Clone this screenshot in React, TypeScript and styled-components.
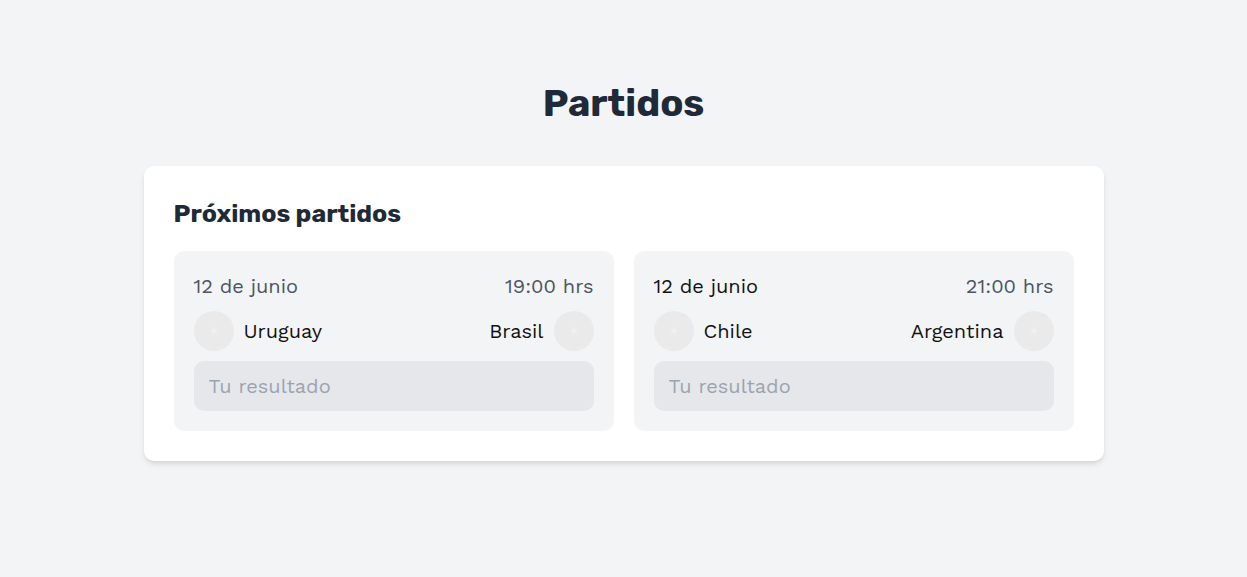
import React from "react";
import styled, { createGlobalStyle } from "styled-components";

const GlobalStyle = createGlobalStyle`
  *, *::before, *::after { box-sizing: border-box; }
  body {
    margin: 0;
    background: #f3f4f6;
    color: #111;
    font-family: "Work Sans", "Inter", sans-serif;
    font-size: 20px;
    font-weight: 400;
    line-height: 30px;
  }
`;

const Page = styled.main`
  max-width: 1000px;
  margin: 0 auto;
  padding: 80px 20px;
`;

const PageTitle = styled.h1`
  margin: 0 0 40px;
  color: #1f2937;
  font-family: "Rubik", "Inter", sans-serif;
  font-size: 38px;
  font-weight: 700;
  line-height: 46px;
  text-align: center;
`;

const Panel = styled.section`
  padding: 30px;
  border-radius: 10px;
  background: #fff;
  box-shadow: 0 4px 6px -1px rgba(0, 0, 0, 0.1), 0 2px 4px -1px rgba(0, 0, 0, 0.06);
`;

const PanelTitle = styled.h2`
  margin: 0 0 20px;
  color: #1f2937;
  font-family: "Rubik", "Inter", sans-serif;
  font-size: 25px;
  font-weight: 700;
  line-height: 35px;
`;

const MatchGrid = styled.div`
  display: grid;
  grid-template-columns: repeat(auto-fit, minmax(320px, 1fr));
  gap: 20px;
`;

const MatchCard = styled.article`
  display: flex;
  flex-direction: column;
  gap: 10px;
  padding: 20px;
  border-radius: 10px;
  background: #f3f4f6;
`;

const Row = styled.div`
  display: flex;
  align-items: center;
  justify-content: space-between;
`;

const When = styled.time<{ $strong?: boolean }>`
  color: ${(p) => (p.$strong ? "#111" : "#4b5563")};
`;

const Team = styled.div<{ $away?: boolean }>`
  display: flex;
  flex-direction: ${(p) => (p.$away ? "row-reverse" : "row")};
  align-items: center;
  gap: 10px;
`;

const Flag = styled.svg`
  display: block;
  flex: none;
  width: 40px;
  height: 40px;
`;

const ResultInput = styled.input`
  display: block;
  width: 100%;
  height: 50px;
  padding: 10px 15px;
  border: 0;
  border-radius: 10px;
  background: #e5e7eb;
  color: #111;
  font: inherit;

  &::placeholder {
    color: #9ca3af;
    opacity: 1;
  }
`;

function TeamLabel({ name, away }: { name: string; away?: boolean }) {
  return (
    <Team $away={away}>
      <Flag viewBox="0 0 40 40" aria-hidden="true">
        <circle cx="20" cy="20" r="20" fill="#eaeaea" />
        <circle cx="20" cy="20" r="4" fill="#ececec" />
        <path d="M20 18 22 20 20 22 18 20Z" fill="#f2f2f2" />
      </Flag>
      <span>{name}</span>
    </Team>
  );
}

type Match = { date: string; time: string; home: string; away: string; highlighted?: boolean };

const matches: Match[] = [
  { date: "12 de junio", time: "19:00", home: "Uruguay", away: "Brasil" },
  { date: "12 de junio", time: "21:00", home: "Chile", away: "Argentina", highlighted: true },
];

export default function App() {
  return (
    <>
      <GlobalStyle />
      <Page>
        <PageTitle>Partidos</PageTitle>
        <Panel>
          <PanelTitle>Próximos partidos</PanelTitle>
          <MatchGrid>
            {matches.map((m) => (
              <MatchCard key={m.home}>
                <Row>
                  <When dateTime="06-12" $strong={m.highlighted}>{m.date}</When>
                  <When dateTime={m.time}>{m.time} hrs</When>
                </Row>
                <Row>
                  <TeamLabel name={m.home} />
                  <TeamLabel name={m.away} away />
                </Row>
                <ResultInput
                  type="text"
                  placeholder="Tu resultado"
                  aria-label={`Tu resultado: ${m.home} - ${m.away}`}
                />
              </MatchCard>
            ))}
          </MatchGrid>
        </Panel>
      </Page>
    </>
  );
}
